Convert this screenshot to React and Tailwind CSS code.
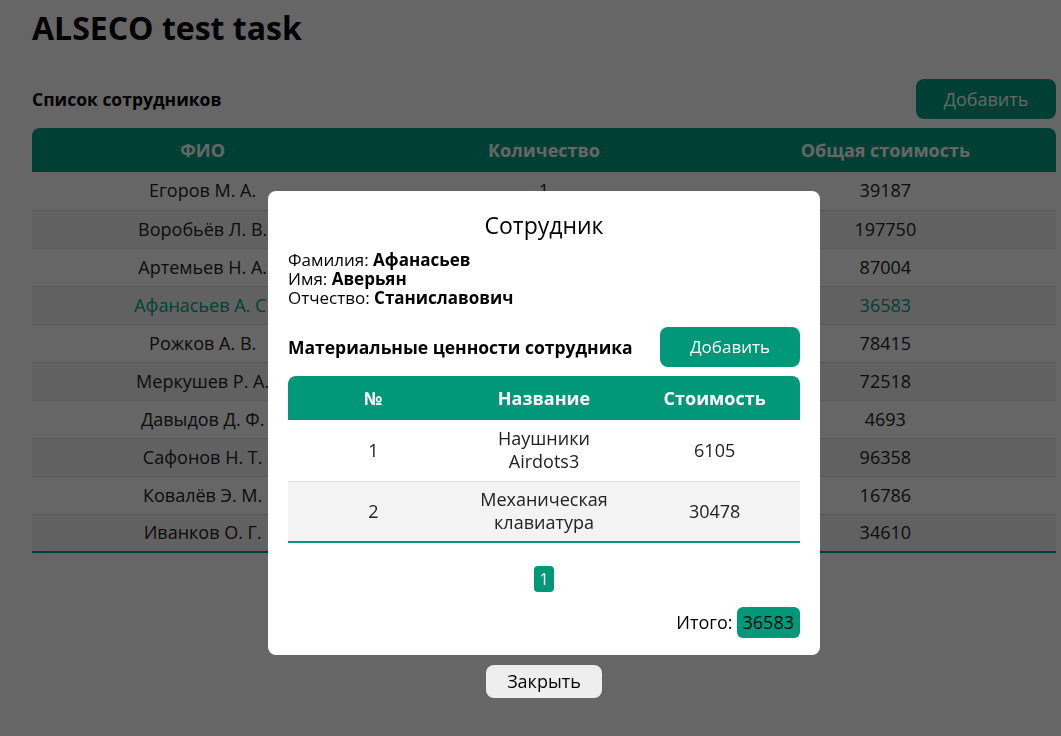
import React from 'react';

const employees = [
  { name: 'Егоров М. А.', count: 1, total: 39187 },
  { name: 'Воробьёв Л. В.', count: 3, total: 197750 },
  { name: 'Артемьев Н. А.', count: 2, total: 87004 },
  { name: 'Афанасьев А. С.', count: 2, total: 36583, active: true },
  { name: 'Рожков А. В.', count: 2, total: 78415 },
  { name: 'Меркушев Р. А.', count: 2, total: 72518 },
  { name: 'Давыдов Д. Ф.', count: 1, total: 4693 },
  { name: 'Сафонов Н. Т.', count: 3, total: 96358 },
  { name: 'Ковалёв Э. М.', count: 1, total: 16786 },
  { name: 'Иванков О. Г.', count: 2, total: 34610 },
];

const items = [
  { id: 1, name: 'Наушники Airdots3', price: 6105 },
  { id: 2, name: 'Механическая клавиатура', price: 30478 },
];

function EmployeeModal() {
  return (
    <div className="fixed inset-0 bg-black/60 flex flex-col items-center pt-[191px] pl-[27px]">
      <div className="w-[552px] bg-white rounded-lg px-5 pt-[19px] pb-[17px] text-black">
        <h2 className="text-center text-[23px] leading-[30px]">Сотрудник</h2>
        <div className="mt-[10px] text-[17px] leading-[19px]">
          <div>Фамилия: <b>Афанасьев</b></div>
          <div>Имя: <b>Аверьян</b></div>
          <div>Отчество: <b>Станиславович</b></div>
        </div>
        <div className="flex items-center justify-between mt-5">
          <span className="font-bold text-[17.5px]">Материальные ценности сотрудника</span>
          <button className="w-[140px] h-10 rounded-lg bg-[#009879] text-white text-[17px]">Добавить</button>
        </div>
        <table className="w-full mt-[9px] table-fixed border-b-2 border-[#009879] text-[18px] text-[#222]">
          <thead>
            <tr className="bg-[#009879] text-white h-11">
              <th className="rounded-tl-lg font-bold">№</th>
              <th className="font-bold">Название</th>
              <th className="rounded-tr-lg font-bold">Стоимость</th>
            </tr>
          </thead>
          <tbody>
            {items.map((it, i) => (
              <tr key={it.id} className={`h-[61px] text-center ${i % 2 ? 'bg-[#f3f3f3]' : 'border-b border-[#ddd]'}`}>
                <td>{it.id}</td>
                <td className="px-4 leading-[23px]">{it.name}</td>
                <td>{it.price}</td>
              </tr>
            ))}
          </tbody>
        </table>
        <div className="flex justify-center mt-[23px]">
          <span className="w-5 h-[26px] rounded bg-[#009879] text-white text-[17px] flex items-center justify-center">1</span>
        </div>
        <div className="flex justify-end items-center gap-1 mt-[15px] text-[18px]">
          <span>Итого:</span>
          <span className="bg-[#009879] rounded-md px-[6px] h-[31px] flex items-center">36583</span>
        </div>
      </div>
      <button className="mt-[10px] w-[116px] h-[33px] rounded-lg bg-[#eeeeee] text-[18px] text-black">Закрыть</button>
    </div>
  );
}

export default function App() {
  return (
    <div className="min-h-screen bg-white pl-8 pr-[5px] text-[#222]" style={{ fontFamily: '"Open Sans", "Noto Sans", sans-serif' }}>
      <h1 className="text-[32px] font-bold leading-[40px] pt-2 text-black">ALSECO test task</h1>
      <div className="flex items-center justify-between mt-[31px]">
        <h3 className="text-[17.5px] font-bold text-black">Список сотрудников</h3>
        <button className="w-[140px] h-10 rounded-lg bg-[#00a182] text-white text-[18px]">Добавить</button>
      </div>
      <table className="w-full mt-[9px] table-fixed border-b-2 border-[#00a182] text-[18px]">
        <thead>
          <tr className="bg-[#00a182] text-white h-11">
            <th className="rounded-tl-lg font-bold">ФИО</th>
            <th className="font-bold">Количество</th>
            <th className="rounded-tr-lg font-bold">Общая стоимость</th>
          </tr>
        </thead>
        <tbody>
          {employees.map((e, i) => (
            <tr
              key={e.name}
              className={`h-[38px] text-center border-b border-[#e0e0e0] last:border-b-0 ${i % 2 ? 'bg-[#f3f3f3]' : ''} ${e.active ? 'text-[#00a182]' : ''}`}
            >
              <td>{e.name}</td>
              <td>{e.count}</td>
              <td>{e.total}</td>
            </tr>
          ))}
        </tbody>
      </table>
      <EmployeeModal />
    </div>
  );
}
